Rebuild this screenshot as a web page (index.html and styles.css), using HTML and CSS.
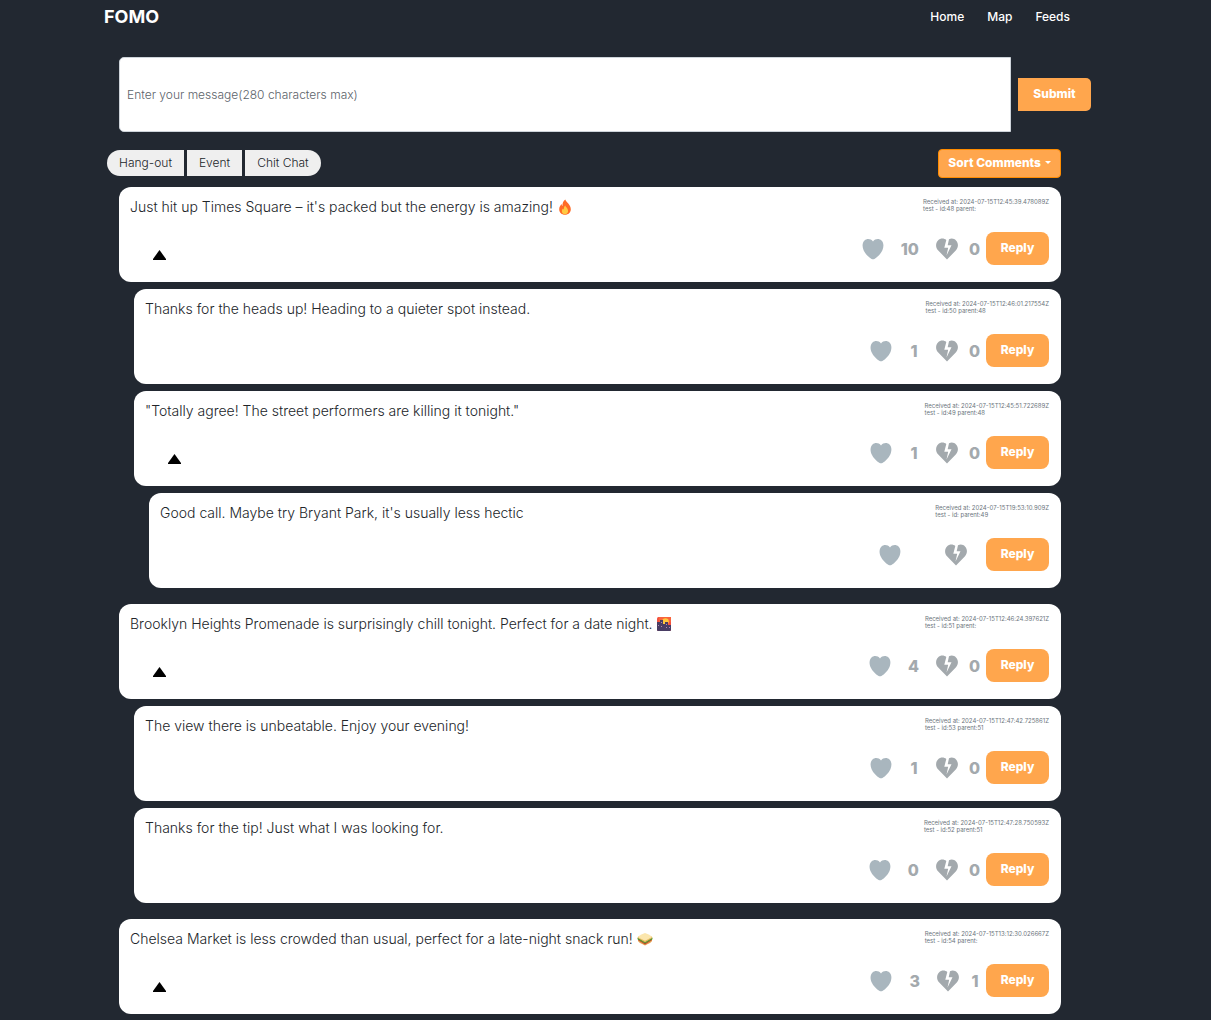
FILE: index.html
```html
<!DOCTYPE html>
<html lang="en">
<head>
<meta charset="utf-8">
<meta name="viewport" content="width=device-width, initial-scale=1">
<title>FOMO</title>
<link rel="stylesheet" href="styles.css">
</head>
<body>
<svg class="sprite" aria-hidden="true">
  <symbol id="heart" viewBox="0 0 22 22"><path d="M11 3.4C8.8.5 4.8.2 2.5 2.5.1 5 .1 8.800 1.600 12.200c1.600 3.700 5 7 8 8.700q1.400.7 2.800 0c3-1.700 6.400-5 8-8.700 1.500-3.400 1.500-7.200-.900-9.700C17.200.2 13.200.5 11 3.400Z" fill="#a9b6be"/></symbol>
  <symbol id="broken" viewBox="0 0 22 22"><path d="M11 21.500 2 12.300C-.6 9.500-.5 5.100 2 2.500 4.400 0 8 0 10.300 2.100L8.300 9.700h3.900L10.500 17.500 15.500 7.300h-3.800L13 1.300C15.500-.2 18.200.5 20 2.400c2.500 2.700 2.600 7.100 0 9.900Z" fill="#a3a9ad"/></symbol>
  <symbol id="up" viewBox="0 0 13 10"><path d="M6.500 0 13 9v1H0V9Z" fill="#000"/></symbol>
</svg>

<header class="navbar">
  <a class="brand" href="#">FOMO</a>
  <nav class="links">
    <a href="#">Home</a>
    <a href="#">Map</a>
    <a href="#">Feeds</a>
  </nav>
</header>

<main class="page">
  <form class="composer">
    <input class="message" type="text" maxlength="280" aria-label="Message" placeholder="Enter your message(280 characters max)">
    <button class="btn submit" type="button">Submit</button>
  </form>

  <div class="toolbar">
    <div class="tags">
      <button class="tag" type="button">Hang-out</button>
      <button class="tag" type="button">Event</button>
      <button class="tag" type="button">Chit Chat</button>
    </div>
    <button class="btn sort" type="button">Sort Comments<span class="caret"></span></button>
  </div>

  <div class="feed">
    <section class="thread">
      <article class="card">
        <div class="content">
          <p class="text">Just hit up Times Square – it's packed but the energy is amazing! <svg class="emoji" viewBox="0 0 16 16" role="img" aria-label="fire"><path d="M8.300.5C9 3 13.800 5.500 13.800 10.200c0 3.300-2.500 5.500-5.800 5.500s-5.800-2.200-5.800-5.500c0-2.400 1.300-4.200 2.400-5.300 0 1 .3 1.700.9 2.100C5.300 4.200 6.200 1.800 8.300.5Z" fill="#ff6b25"/><path d="M8.200 6.500c.5 1.600 2.900 2.900 2.900 5.500 0 2-1.300 3.200-3.100 3.200S4.900 14 4.900 12.200c0-1.300.6-2.100 1.200-2.700.1.600.4.900.8 1-.1-1.500.3-3 1.300-4Z" fill="#ffca42"/></svg></p>
          <button class="toggle" type="button" aria-label="Collapse replies"><svg class="arrow"><use href="#up"/></svg></button>
        </div>
        <div class="side">
          <div class="meta">Received at: 2024-07-15T12:45:39.478089Z<br>test - id:48 parent:</div>
          <div class="actions">
            <button class="vote" type="button" aria-label="Like"><svg class="icon"><use href="#heart"/></svg><span class="count">10</span></button>
            <button class="vote down" type="button" aria-label="Dislike"><svg class="icon"><use href="#broken"/></svg><span class="count">0</span></button>
            <button class="btn reply" type="button">Reply</button>
          </div>
        </div>
      </article>
      <div class="replies">
        <article class="card">
          <div class="content"><p class="text">Thanks for the heads up! Heading to a quieter spot instead.</p></div>
          <div class="side">
            <div class="meta">Received at: 2024-07-15T12:46:01.217554Z<br>test - id:50 parent:48</div>
            <div class="actions">
              <button class="vote" type="button" aria-label="Like"><svg class="icon"><use href="#heart"/></svg><span class="count">1</span></button>
              <button class="vote down" type="button" aria-label="Dislike"><svg class="icon"><use href="#broken"/></svg><span class="count">0</span></button>
              <button class="btn reply" type="button">Reply</button>
            </div>
          </div>
        </article>
        <article class="card">
          <div class="content">
            <p class="text">"Totally agree! The street performers are killing it tonight."</p>
            <button class="toggle" type="button" aria-label="Collapse replies"><svg class="arrow"><use href="#up"/></svg></button>
          </div>
          <div class="side">
            <div class="meta">Received at: 2024-07-15T12:45:51.722689Z<br>test - id:49 parent:48</div>
            <div class="actions">
              <button class="vote" type="button" aria-label="Like"><svg class="icon"><use href="#heart"/></svg><span class="count">1</span></button>
              <button class="vote down" type="button" aria-label="Dislike"><svg class="icon"><use href="#broken"/></svg><span class="count">0</span></button>
              <button class="btn reply" type="button">Reply</button>
            </div>
          </div>
        </article>
        <div class="replies">
          <article class="card">
            <div class="content"><p class="text">Good call. Maybe try Bryant Park, it's usually less hectic</p></div>
            <div class="side">
              <div class="meta">Received at: 2024-07-15T19:53:10.909Z<br>test - id: parent:49</div>
              <div class="actions">
                <button class="vote" type="button" aria-label="Like"><svg class="icon"><use href="#heart"/></svg><span class="count"></span></button>
                <button class="vote down" type="button" aria-label="Dislike"><svg class="icon"><use href="#broken"/></svg><span class="count"></span></button>
                <button class="btn reply" type="button">Reply</button>
              </div>
            </div>
          </article>
        </div>
      </div>
    </section>

    <section class="thread">
      <article class="card">
        <div class="content">
          <p class="text">Brooklyn Heights Promenade is surprisingly chill tonight. Perfect for a date night. <svg class="emoji" viewBox="0 0 16 16" role="img" aria-label="city at sunset"><rect x="1" y="1" width="14" height="14" rx="1.500" fill="#f4513f"/><path d="M3 1h12v5H3z" fill="#f8643c"/><circle cx="9.500" cy="5.500" r="3.300" fill="#ffc83d"/><path d="M1 6h3V4h3v4h2V6h3v3h3v5q0 1-1 1H2q-1 0-1-1Z" fill="#493d64"/><path d="M5 6h1v1H5zM2 9h1v1H2zM5 10h1v1H5zM10 8h1v1h-1zM10 11h1v1h-1zM13 11h1v1h-1z" fill="#b18bb0"/></svg></p>
          <button class="toggle" type="button" aria-label="Collapse replies"><svg class="arrow"><use href="#up"/></svg></button>
        </div>
        <div class="side">
          <div class="meta">Received at: 2024-07-15T12:46:24.397621Z<br>test - id:51 parent:</div>
          <div class="actions">
            <button class="vote" type="button" aria-label="Like"><svg class="icon"><use href="#heart"/></svg><span class="count">4</span></button>
            <button class="vote down" type="button" aria-label="Dislike"><svg class="icon"><use href="#broken"/></svg><span class="count">0</span></button>
            <button class="btn reply" type="button">Reply</button>
          </div>
        </div>
      </article>
      <div class="replies">
        <article class="card">
          <div class="content"><p class="text">The view there is unbeatable. Enjoy your evening!</p></div>
          <div class="side">
            <div class="meta">Received at: 2024-07-15T12:47:42.725861Z<br>test - id:53 parent:51</div>
            <div class="actions">
              <button class="vote" type="button" aria-label="Like"><svg class="icon"><use href="#heart"/></svg><span class="count">1</span></button>
              <button class="vote down" type="button" aria-label="Dislike"><svg class="icon"><use href="#broken"/></svg><span class="count">0</span></button>
              <button class="btn reply" type="button">Reply</button>
            </div>
          </div>
        </article>
        <article class="card">
          <div class="content"><p class="text">Thanks for the tip! Just what I was looking for.</p></div>
          <div class="side">
            <div class="meta">Received at: 2024-07-15T12:47:28.750593Z<br>test - id:52 parent:51</div>
            <div class="actions">
              <button class="vote" type="button" aria-label="Like"><svg class="icon"><use href="#heart"/></svg><span class="count">0</span></button>
              <button class="vote down" type="button" aria-label="Dislike"><svg class="icon"><use href="#broken"/></svg><span class="count">0</span></button>
              <button class="btn reply" type="button">Reply</button>
            </div>
          </div>
        </article>
      </div>
    </section>

    <section class="thread">
      <article class="card">
        <div class="content">
          <p class="text">Chelsea Market is less crowded than usual, perfect for a late-night snack run! <svg class="emoji" viewBox="0 0 16 16" role="img" aria-label="sandwich"><path d="m1 8 7 5 7-5v2q-.5 1.500-7 4.500Q1.500 11.500 1 10Z" fill="#e6a14f"/><path d="m1 7.500 7 4.500 7-4.500v1.500l-7 4.500L1 9Z" fill="#c4382d"/><path d="m.5 6.500 7.500 4 7.500-4v1.700L8 12.500.5 8.200Z" fill="#5d9b2f"/><path d="M1 5.500v1.400l7 4.300 7-4.300V5.500Z" fill="#ecb65e"/><path d="M1 5.700Q1 5 8 2q7 3 7 3.700T8 9.700Q1 6.500 1 5.700Z" fill="#fbe6ad"/></svg></p>
          <button class="toggle" type="button" aria-label="Collapse replies"><svg class="arrow"><use href="#up"/></svg></button>
        </div>
        <div class="side">
          <div class="meta">Received at: 2024-07-15T13:12:30.026667Z<br>test - id:54 parent:</div>
          <div class="actions">
            <button class="vote" type="button" aria-label="Like"><svg class="icon"><use href="#heart"/></svg><span class="count">3</span></button>
            <button class="vote down" type="button" aria-label="Dislike"><svg class="icon"><use href="#broken"/></svg><span class="count">1</span></button>
            <button class="btn reply" type="button">Reply</button>
          </div>
        </div>
      </article>
    </section>
  </div>
</main>
</body>
</html>
```
FILE: styles.css
```css
* { box-sizing: border-box; }

body {
  margin: 0;
  background: #222831;
  color: #212529;
  font-family: Inter, "Liberation Sans", sans-serif;
  font-size: 14px;
  font-weight: 300;
}

button, input { font: inherit; }
button { border: 0; padding: 0; background: none; cursor: pointer; }
.sprite { display: none; }

.navbar {
  display: flex;
  align-items: center;
  justify-content: space-between;
  height: 33px;
  padding: 0 141px 0 104px;
}
.navbar a { color: #fff; text-decoration: none; }
.brand { font-size: 18px; font-weight: 700; }
.links { display: flex; gap: 23px; font-size: 12px; font-weight: 500; }

.page { padding: 24px 120px 6px 119px; }

.composer { display: flex; align-items: center; gap: 7px; }
.message {
  flex: 1;
  min-width: 0;
  height: 75px;
  padding: 0 7px;
  border: 1px solid #ced4da;
  border-radius: 5px 0 0 5px;
  background: #fff;
  font-size: 12px;
}
.message::placeholder { color: #5c636a; opacity: 1; }

.btn {
  height: 33px;
  padding: 0 14px 2px;
  background: #ffa64d;
  color: #fff;
  font-size: 12px;
  font-weight: 800;
  white-space: nowrap;
}
.submit { min-width: 73px; border-radius: 0 5px 5px 0; }

.toolbar {
  display: flex;
  align-items: center;
  justify-content: space-between;
  margin: 17px 30px 9px -12px;
}
.tags { display: flex; gap: 3px; padding-bottom: 2px; }
.tag {
  height: 26px;
  padding: 0 12px;
  background: #efefef;
  color: #212529;
  font-size: 12px;
}
.tag:first-child { border-radius: 13px 0 0 13px; }
.tag:last-child { border-radius: 0 13px 13px 0; }
.sort {
  display: flex;
  align-items: center;
  gap: 4px;
  height: 29px;
  padding: 0 9px 2px;
  border: 1px solid #ff8c00;
  border-radius: 4px;
}
.caret { border: 3px solid transparent; border-top-color: #fff; border-bottom: 0; }

.feed { display: flex; flex-direction: column; gap: 16px; margin-right: 30px; }
.thread, .replies { display: flex; flex-direction: column; gap: 7px; }
.replies { padding-left: 15px; }

.card {
  display: flex;
  justify-content: space-between;
  min-height: 95px;
  padding: 11px 12px 17px 11px;
  border-radius: 12px;
  background: #fff;
}
.content, .side { display: flex; flex-direction: column; justify-content: space-between; }
.content { align-items: flex-start; }
.side { align-items: flex-end; }
.text { margin: 0; font-size: 14px; line-height: 17px; }
.emoji { width: 16px; height: 16px; margin: -2px 0; vertical-align: -1px; }
.toggle { display: flex; margin: 0 0 5px 23px; }
.arrow { width: 13px; height: 10px; }

.meta { color: #6c757d; font-size: 6px; font-weight: 400; line-height: 7px; }
.actions { display: flex; align-items: center; }
.vote { display: flex; align-items: center; gap: 17px; margin-right: 17px; }
.down { gap: 11px; margin-right: 6px; }
.icon { width: 22px; height: 22px; }
.count { min-width: 10px; color: #a3a9ad; font-size: 16px; font-weight: 800; text-align: center; }
.down .count:empty { min-width: 2px; }
.reply { min-width: 63px; border-radius: 8px; }
```
